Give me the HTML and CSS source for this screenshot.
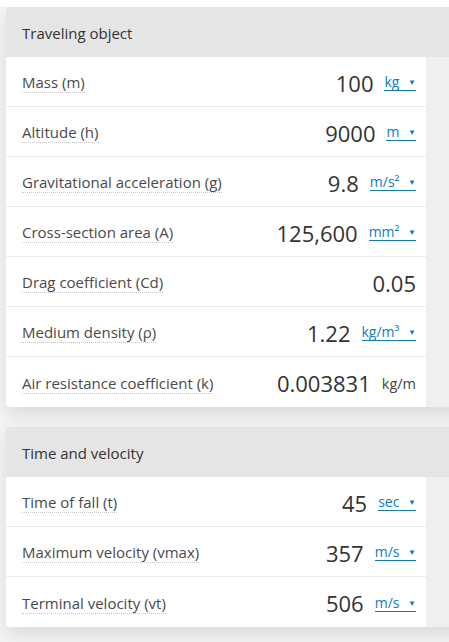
FILE: index.html
```html
<!DOCTYPE html>
<html>
<head>
<meta charset="utf-8">
<link rel="stylesheet" href="styles.css">
</head>
<body>
<div class="page">
  <section class="card">
    <div class="card-head">Traveling object</div>
    <div class="rows">
      <div class="row"><span class="label">Mass (m)</span><span class="val">100</span><a class="unit">kg <i>▼</i></a></div>
      <div class="row"><span class="label">Altitude (h)</span><span class="val">9000</span><a class="unit">m <i>▼</i></a></div>
      <div class="row"><span class="label">Gravitational acceleration (g)</span><span class="val">9.8</span><a class="unit">m/s² <i>▼</i></a></div>
      <div class="row"><span class="label">Cross-section area (A)</span><span class="val">125,600</span><a class="unit">mm² <i>▼</i></a></div>
      <div class="row"><span class="label">Drag coefficient (Cd)</span><span class="val">0.05</span></div>
      <div class="row"><span class="label">Medium density (ρ)</span><span class="val">1.22</span><a class="unit">kg/m³ <i>▼</i></a></div>
      <div class="row last"><span class="label">Air resistance coefficient (k)</span><span class="val">0.003831</span><span class="plain">kg/m</span></div>
    </div>
  </section>
  <section class="card">
    <div class="card-head">Time and velocity</div>
    <div class="rows">
      <div class="row"><span class="label">Time of fall (t)</span><span class="val">45</span><a class="unit">sec <i>▼</i></a></div>
      <div class="row"><span class="label">Maximum velocity (vmax)</span><span class="val">357</span><a class="unit">m/s <i>▼</i></a></div>
      <div class="row last"><span class="label">Terminal velocity (vt)</span><span class="val">506</span><a class="unit">m/s <i>▼</i></a></div>
    </div>
  </section>
</div>
</body>
</html>
```
FILE: styles.css
```css
html, body {
  margin: 0;
  padding: 0;
  overflow: hidden;
  background: #f4f4f4;
  font-family: "Open Sans", "Noto Sans", sans-serif;
}
.page {
  padding: 7px 0 0 6px;
  display: flex;
  flex-direction: column;
  gap: 20px;
  background: linear-gradient(#ffffff 0, #ffffff 7px, #f4f4f4 7px);
  min-height: 642px;
  box-sizing: border-box;
}
.card {
  width: 460px;
  border-radius: 3px 0 0 4px;
  box-shadow: 0 8px 18px rgba(0,0,0,0.10);
  background: #efefef;
}
.card-head {
  height: 50px;
  background: #e5e5e5;
  display: flex;
  align-items: center;
  padding-left: 16px;
  padding-top: 2px;
  box-sizing: border-box;
  font-size: 15px;
  color: #333;
  border-radius: 3px 0 0 0;
}
.rows {
  width: 420px;
  background: #fff;
  border-radius: 0 0 0 4px;
}
.row {
  height: 50px;
  box-sizing: border-box;
  border-bottom: 1px solid #ececec;
  display: flex;
  align-items: center;
  padding: 2px 10px 0 16px;
}
.row.last { border-bottom: 0; }
.label {
  font-size: 15px;
  color: #4a4a4a;
  border-bottom: 1px dotted #c4c4c4;
  line-height: 20px;
  margin-right: auto;
}
.val {
  font-size: 22px;
  color: #333;
}
.unit {
  margin-left: 11px;
  font-size: 14px;
  color: #0d7cc1;
  border-bottom: 1px solid #0d7cc1;
  line-height: 16px;
  white-space: nowrap;
}
.unit i {
  font-style: normal;
  font-size: 8px;
  vertical-align: 2px;
  margin-left: 5px;
}
.plain {
  margin-left: 11px;
  font-size: 14.5px;
  color: #444;
}
```
